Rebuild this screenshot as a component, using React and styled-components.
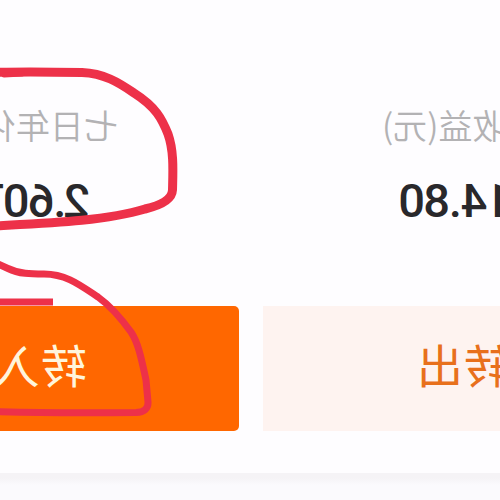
import React from 'react';
import styled, { createGlobalStyle } from 'styled-components';

const GlobalStyle = createGlobalStyle`
  body {
    margin: 0;
    background: #fefdff;
  }
`;

export default function App() {
  return (
    <>
      <GlobalStyle />
      <Screen>
        <Mirror>
          <Stats>
            <Stat $align="flex-end" $pad="0 117px 0 0">
              <Label>收益(元)</Label>
              <Amount $inset="0 18px 0 0">
                14<Dot $gap="1px">.</Dot>80
              </Amount>
            </Stat>
            <Stat $align="flex-start" $pad="0 0 0 147px">
              <Label>七日年化</Label>
              <Amount $inset="0 0 0 28px">
                2<Dot $gap="-1px">.</Dot>607
              </Amount>
            </Stat>
          </Stats>
          <Actions>
            <Button $align="flex-end" $pad="0 153px 11px 0">
              转出
            </Button>
            <Button $primary $align="flex-start" $pad="0 0 11px 152px">
              转入
            </Button>
          </Actions>
          <Footer />
        </Mirror>
        <Marks viewBox="0 0 500 500">
          <path
            strokeWidth="9"
            d="M-6 72.500C20 71.500 55 72 82 72.500C104 73.500 118 82 134 93C156 107 162 119 168 134C174 151 173 170 172.500 190C172 201 158 206 145 209C105 221 50 223 -6 226"
          />
          <path strokeWidth="5" d="M4 75L22 74" />
          <path
            strokeWidth="7"
            d="M-4 263L8 268.500C19 274 31 274 44 274C66 274 80 285 98 297C112 307 123 321 131 332C139 344 142 362 146 380L148 402Q148.500 412 136 412.500C95 413 40 413 -6 411.500"
          />
          <path strokeWidth="7" strokeLinecap="butt" d="M-6 302H53" />
        </Marks>
      </Screen>
    </>
  );
}

const Screen = styled.div`
  position: relative;
  width: 500px;
  height: 500px;
  overflow: hidden;
  background: #fefdff;
  font-family: 'Noto Sans CJK SC', sans-serif;
`;

const Mirror = styled.div`
  display: flex;
  flex-direction: column;
  height: 100%;
  transform: scaleX(-1);
`;

const Stats = styled.div`
  display: grid;
  grid-template-columns: 235px 265px;
  height: 306px;
  padding-top: 105px;
  box-sizing: border-box;
`;

const Stat = styled.div`
  display: flex;
  flex-direction: column;
  align-items: ${props => props.$align};
  min-width: 0;
  padding: ${props => props.$pad};
  white-space: nowrap;
`;

const Label = styled.div`
  height: 40px;
  line-height: 40px;
  font-size: 34px;
  font-weight: 350;
  color: #b3b2b4;
`;

const Amount = styled.div`
  height: 54px;
  margin: ${props => props.$inset};
  padding-top: 29px;
  line-height: 54px;
  font-family: Roboto, sans-serif;
  font-size: 47px;
  font-weight: 500;
  letter-spacing: -1.7px;
  color: #29282b;
`;

const Dot = styled.span`
  margin-left: ${props => props.$gap};
`;

const Actions = styled.div`
  display: grid;
  grid-template-columns: 237px 239px;
  column-gap: 24px;
  height: 125px;
`;

const Button = styled.div`
  display: flex;
  align-items: center;
  justify-content: ${props => props.$align};
  min-width: 0;
  box-sizing: border-box;
  padding: ${props => props.$pad};
  border-radius: ${props => (props.$primary ? '5px 0 0 5px' : '0')};
  background: ${props => (props.$primary ? '#ff6700' : '#fef3f0')};
  color: ${props => (props.$primary ? '#fff5dc' : '#e8701c')};
  font-size: 46px;
  font-weight: 400;
  letter-spacing: 1px;
  line-height: 60px;
  white-space: nowrap;
`;

const Footer = styled.div`
  flex: 1;
  margin-top: 42px;
  background: linear-gradient(#f5f3f6, #f5f3f6 5px, #fbfafd 12px);
`;

const Marks = styled.svg`
  position: absolute;
  inset: 0;
  fill: none;
  stroke: #ed3149;
  stroke-linecap: round;
  stroke-linejoin: round;
`;
